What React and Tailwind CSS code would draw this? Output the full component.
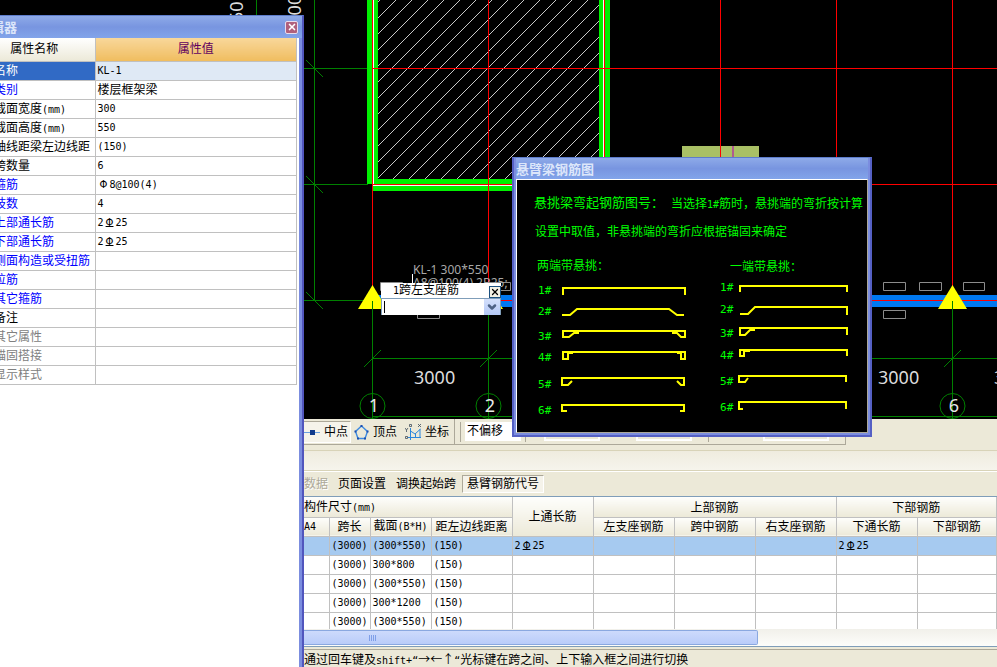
// App.jsx — beam reinforcement editor workspace
import { useState } from "react";
import { ChevronDown, X } from "lucide-react";

const RED = "#f00";
const GREEN = "#008000";
const WALL = "#00f000";

const PROPS = [
  { name: "名称", value: "KL-1", selected: true },
  { name: "类别", value: "楼层框架梁", tone: "text-[#0000ff]" },
  { name: "截面宽度(mm)", value: "300" },
  { name: "截面高度(mm)", value: "550" },
  { name: "轴线距梁左边线距", value: "(150)" },
  { name: "跨数量", value: "6" },
  { name: "箍筋", value: "Φ8@100(4)", tone: "text-[#0000ff]" },
  { name: "肢数", value: "4", tone: "text-[#0000ff]" },
  { name: "上部通长筋", value: "2Φ25", tone: "text-[#0000ff]" },
  { name: "下部通长筋", value: "2Φ25", tone: "text-[#0000ff]" },
  { name: "侧面构造或受扭筋", value: "", tone: "text-[#0000ff]" },
  { name: "拉筋", value: "", tone: "text-[#0000ff]" },
  { name: "其它箍筋", value: "", tone: "text-[#0000ff]" },
  { name: "备注", value: "" },
  { name: "其它属性", value: "", tone: "text-[#808080]" },
  { name: "锚固搭接", value: "", tone: "text-[#808080]" },
  { name: "显示样式", value: "", tone: "text-[#808080]" },
];

const SPANS = [
  ["(3000)", "(300*550)", "(150)", "2Φ25", "", "", "", "2Φ25", ""],
  ["(3000)", "300*800", "(150)", "", "", "", "", "", ""],
  ["(3000)", "(300*550)", "(150)", "", "", "", "", "", ""],
  ["(3000)", "300*1200", "(150)", "", "", "", "", "", ""],
  ["(3000)", "(300*550)", "(150)", "", "", "", "", "", ""],
];

// Both ends cantilevered
const BARS_BOTH = [
  { y: 294, d: "M563 295V288H685V295" },
  { y: 315, d: "M562 315H570L577 309H669L677 315H684" },
  { y: 340, d: "M579 333H574L569 337H563V331H685V337H681L677 333H672" },
  { y: 361, d: "M573 353H568V359H563V352H685V359H681V353H677" },
  { y: 388, d: "M572 381L568 385H562V378H684V385H681L677 381" },
  { y: 414, d: "M567 411H562V405H684V411H680" },
];

// One end cantilevered
const BARS_ONE = [
  { y: 291, d: "M740 292V286H847V292" },
  { y: 313, d: "M740 314H748L755 307H847V315" },
  { y: 337, d: "M755 330H750L745 335H740V328H847V335" },
  { y: 359, d: "M750 351H744V356H740V350H847V356" },
  { y: 385, d: "M748 378L745 382H739V376H846V382" },
  { y: 411, d: "M743 409H739V402H846V409" },
];

// Half-width characters are set narrower than the Chinese ones around them
function Mixed({ children }) {
  return String(children)
    .split(/([\x21-\x7e“]+|Φ)/)
    .map((part, i, all) => {
      if (part === "Φ") {
        const ribbed = all.join("").startsWith("2");
        return (
          <span key={i} className="inline-block w-3 text-center font-['DejaVu_Sans'] text-[10px]">
            <span className={ribbed ? "underline underline-offset-0" : ""}>Φ</span>
          </span>
        );
      }
      return i % 2 ? (
        <span key={i} className="font-['DejaVu_Sans_Mono'] text-[10px]">{part}</span>
      ) : (
        part
      );
    });
}

function GridMarker({ x, label }) {
  return (
    <g>
      <polygon points={`${x + 0.5},285 ${x - 14},309 ${x + 15},309`} fill="#ff0" />
      <path d={`M${x + 0.5} 301V419M${x - 8} 367L${x + 9} 350`} stroke={GREEN} fill="none" />
      <circle cx={x + 0.5} cy="406" r="12.5" stroke={GREEN} fill="none" />
      <text x={x + 2} y="412" textAnchor="middle" fontSize="18" fill="#e8e8e8">{label}</text>
    </g>
  );
}

function Drawing() {
  return (
    <svg className="block w-full bg-black" height="419" fontFamily="'Noto Sans', sans-serif">
      <defs>
        <pattern id="hatch" width="16" height="16" patternUnits="userSpaceOnUse">
          <path d="M12 0L-4 16M28 0L12 16" stroke="#c8c8c8" />
        </pattern>
      </defs>

      {/* Dimension lines */}
      <g stroke={GREEN} fill="none">
        <path d="M256.5 0V20M314.5 0V300M300 68.5H368M300 184.5H368M300 300.5H372" />
        <path d="M306 60L323 77M306 176L323 193M306 292L323 309" />
        <path d="M372 358.5H4000M372 416.5H4000" />
      </g>

      {/* Walls */}
      <rect x="378" y="0" width="221" height="179" fill="url(#hatch)" />
      <path d="M367 0H378V184H367zM599 0H610V184H599zM372 179H610V191H372z" fill={WALL} />
      <path d="M373.5 0V184M603.5 0V184M373 185.5H604" stroke="#fff" fill="none" />
      <rect x="682" y="146" width="77" height="14" fill="#a9c065" />
      <rect x="732" y="146" width="2" height="14" fill="#b05a90" />

      {/* Beam and axes */}
      <rect x="372" y="295" width="100%" height="12" fill="#0078f0" />
      <g stroke={RED} fill="none">
        <path d="M372.5 0V300M488.5 0V300M604.5 0V300M720.5 0V300M836.5 0V300M952.5 0V300" />
        <path d="M372 68.5H4000M372 184.5H4000M372 300.5H4000" />
      </g>
      <GridMarker x={372} label="1" />
      <GridMarker x={488} label="2" />
      <GridMarker x={952} label="6" />

      {/* Rebar note slots */}
      <g stroke="#8c8c8c" fill="none">
        <path d="M380.5 282.5h22v8h-22zM488.5 282.5h22v8h-22zM417.5 310.5h22v8h-22z" />
        <path d="M883.5 282.5h22v8h-22zM919.5 282.5h22v8h-22zM963.5 282.5h21v8h-21zM883.5 310.5h22v8h-22z" />
      </g>
      <path d="M412.5 274V284" stroke="#fff" />
      <g fill="#a8a8a8" fontSize="12">
        <text x="413" y="274">KL-1 300*550</text>
        <text x="413" y="287">A8@100(4) 2B25;</text>
      </g>
      <g fill="#dcdcdc" fontSize="18">
        <text x="414" y="384">3000</text>
        <text x="878" y="384">3000</text>
        <text x="994" y="384">3000</text>
        <text transform="translate(243 22) rotate(-90)">50</text>
        <text transform="translate(301 36) rotate(-90)">3000</text>
      </g>
    </svg>
  );
}

function PropertyWindow() {
  return (
    <section className="absolute top-[15px] bottom-0 -left-[60px] flex w-[364px] flex-col border-t border-r-2 border-t-[#5d7ccb] border-r-[#5156bd] bg-[#7b8ddf]">
      <header className="flex h-[22px] shrink-0 items-center justify-between bg-linear-to-b from-[#8eaae8] via-[#7895e0] to-[#82a4ea] pr-1 pl-3">
        <h2 className="pt-0.5 text-[13px] font-bold text-[#dce6fa]">属性编辑器</h2>
        <button
          type="button"
          aria-label="关闭"
          className="grid h-[13px] w-[13px] place-items-center rounded-xs border border-[#e8dcec] bg-[#b0607c] text-white"
        >
          <X size={10} strokeWidth={4} />
        </button>
      </header>
      <div className="mr-[3px] flex-1 bg-white">
        <table className="w-[357px] table-fixed border-collapse leading-[14px]">
          <colgroup>
            <col className="w-[155px]" />
            <col />
          </colgroup>
          <thead>
            <tr className="h-[23px]">
              <th className="border-r border-b border-[#c0c0c0] bg-linear-to-b from-white to-[#ece9d8] p-0 pl-[34px] font-normal">
                属性名称
              </th>
              <th className="border-r border-b border-[#c0c0c0] bg-linear-to-b from-[#f8d79a] to-[#f0bd5e] p-0 font-normal text-[#600060]">
                属性值
              </th>
            </tr>
          </thead>
          <tbody>
            {PROPS.map((row) => (
              <tr key={row.name} className="h-[19px]">
                <td
                  className={`border-r border-b border-[#c0c0c0] p-0 pt-px pl-[54px] whitespace-nowrap ${
                    row.selected ? "bg-[#316ac5] text-white" : row.tone || "text-black"
                  }`}
                >
                  <Mixed>{row.name}</Mixed>
                </td>
                <td
                  className={`border-r border-b border-[#c0c0c0] p-0 pl-0.5 ${
                    row.selected ? "bg-[#dfe9f5]" : ""
                  }`}
                >
                  <Mixed>{row.value}</Mixed>
                </td>
              </tr>
            ))}
          </tbody>
        </table>
      </div>
    </section>
  );
}

function SupportPopup() {
  const [value, setValue] = useState("");
  return (
    <div className="absolute top-[283px] left-[381px] w-[120px] bg-white">
      <div className="flex h-[15px] items-center justify-between pl-3 leading-[15px]">
        <label htmlFor="support">
          <Mixed>1跨左支座筋</Mixed>
        </label>
        <button
          type="button"
          aria-label="关闭"
          className="mt-0.5 grid h-3 w-3 place-items-center border border-[#1c5180] bg-[#f4f1e4] text-black"
        >
          <X size={10} strokeWidth={3} />
        </button>
      </div>
      <div className="flex h-[17px] border border-b-0 border-[#7f9db9]">
        <input
          id="support"
          value={value}
          onChange={(e) => setValue(e.target.value)}
          className="my-0.5 ml-0.5 min-w-0 flex-1 border-l border-black outline-none"
        />
        <button
          type="button"
          aria-label="展开"
          className="grid w-4 place-items-center bg-linear-to-b from-[#d4e0fc] to-[#b4c8f6] text-[#4d6185]"
        >
          <ChevronDown size={12} strokeWidth={5} />
        </button>
      </div>
    </div>
  );
}

function CantileverDialog() {
  return (
    <section className="absolute top-[157px] left-[512px] w-[360px] border-2 border-t border-[#5560c4] border-t-[#5d7ccb] bg-[#7b8ddf] px-0.5 pb-0.5">
      <header className="flex h-[21px] items-center bg-linear-to-b from-[#8eaae8] via-[#7895e0] to-[#82a4ea]">
        <h2 className="pt-0.5 text-[13px] font-bold text-[#dce6fa]">悬臂梁钢筋图</h2>
      </header>
      <div className="border border-white border-r-[#aca899] border-b-[#aca899] bg-black">
        <svg viewBox="517 180 350 252" className="block w-full" fill="#00ff00" fontSize="12">
          <text x="534" y="207" fontSize="13">悬挑梁弯起钢筋图号：</text>
          <text x="671" y="208">
            当选择<tspan fontSize="10" fontFamily="DejaVu Sans Mono">1#</tspan>筋时，悬挑端的弯折按计算
          </text>
          <text x="535" y="236">设置中取值，非悬挑端的弯折应根据锚固来确定</text>
          <text x="537" y="270">两端带悬挑：</text>
          <text x="730" y="271">一端带悬挑：</text>
          <g fontFamily="DejaVu Sans Mono" fontSize="11">
            {BARS_BOTH.map((bar, i) => (
              <text key={i} x="538" y={bar.y}>{i + 1}#</text>
            ))}
            {BARS_ONE.map((bar, i) => (
              <text key={i} x="720" y={bar.y}>{i + 1}#</text>
            ))}
          </g>
          <g stroke="#ff0" strokeWidth="2" fill="none">
            {[...BARS_BOTH, ...BARS_ONE].map((bar) => (
              <path key={bar.d} d={bar.d} />
            ))}
          </g>
        </svg>
      </div>
    </section>
  );
}

function SnapToolbar() {
  return (
    <div className="flex h-[26px] w-[542px] items-center border-r border-b border-[#aca899]">
      <button
        type="button"
        className="flex h-[22px] w-[47px] items-center gap-1 border-t border-r border-b border-t-[#aca899] border-r-white border-b-white bg-[#f5f3ea]"
      >
        <svg width="16" height="16">
          <path d="M0 8.500H16" stroke="#6aa0e0" strokeWidth="1" />
          <rect x="6" y="6" width="5" height="5" fill="#103a8c" />
        </svg>
        中点
      </button>
      <button type="button" className="flex items-center gap-1 pl-[3px]">
        <svg width="15" height="16" fill="none">
          <path d="M7.500 2L13.500 7.500L11 14.500H4L1.500 7.500Z" stroke="#3d8ae0" strokeWidth="1.400" />
          <path d="M6.500 1h2v2h-2zM12.500 6.500h2v2h-2zM10 13.500h2v2h-2zM3 13.500h2v2h-2zM.5 6.500h2v2h-2z" fill="#1c4fae" />
        </svg>
        顶点
      </button>
      <button type="button" className="flex items-center gap-1 pl-2">
        <svg width="16" height="16" fill="none">
          <path d="M5.500 4V16M3 13.500H16M5.500 7L10 10L15.500 5M10.500 10V14M15 5V13" stroke="#2a86dc" />
          <path d="M4.500 .5h2v2h-2zM13 0l3 3M16 0l-3 3M0 4l1.500 2l1.500-2M1.500 6v2M.5 12.500h2v2h-2z" stroke="#3f4c5c" strokeWidth=".8" />
        </svg>
        坐标
      </button>
      <span className="ml-[5px] h-full w-px bg-[#aca899]" />
      <span className="ml-[5px] h-5 w-px bg-[#aca899]" />
      <select
        aria-label="偏移"
        className="ml-1 h-[19px] w-14 appearance-none border-r-2 border-white bg-white pl-0.5 leading-[17px]"
      >
        <option>不偏移</option>
      </select>
      <span className="ml-1 h-5 w-px bg-[#aca899]" />
      <input aria-label="X" readOnly className="ml-[18px] h-[19px] w-14 border-2 border-white" />
      <input aria-label="Y" readOnly className="ml-9 h-[19px] w-14 border-2 border-white" />
      <span className="ml-4 h-5 w-px bg-[#aca899]" />
      <input aria-label="角度" readOnly className="ml-[54px] h-[19px] w-[66px] border-2 border-white" />
    </div>
  );
}

function SpanTable() {
  const head =
    "border-r border-b border-[#c0c0c0] bg-linear-to-b from-[#fefefc] to-[#ece9d8] p-0 font-normal whitespace-nowrap";
  return (
    <div className="h-[132px] overflow-hidden bg-white">
      <table className="w-full table-fixed border-collapse leading-[14px]">
        <colgroup>
          <col className="w-[25px]" />
          <col className="w-[41px]" />
          <col className="w-[61px]" />
          <col className="w-[81px]" />
          <col className="w-[81px]" />
          <col className="w-[81px]" />
          <col className="w-[81px]" />
          <col className="w-[81px]" />
          <col className="w-[81px]" />
          <col />
        </colgroup>
        <thead>
          <tr className="h-5">
            <th colSpan={4} className={`${head} pt-0.5 text-left`}><Mixed>构件尺寸(mm)</Mixed></th>
            <th rowSpan={2} className={`${head} pt-0.5`}>上通长筋</th>
            <th colSpan={3} className={`${head} pt-0.5`}>上部钢筋</th>
            <th colSpan={2} className={`${head} pt-0.5`}>下部钢筋</th>
          </tr>
          <tr className="h-[19px]">
            <th className={`${head} text-left`}><Mixed>A4</Mixed></th>
            <th className={head}>跨长</th>
            <th className={head}><Mixed>截面(B*H)</Mixed></th>
            <th className={head}>距左边线距离</th>
            <th className={head}>左支座钢筋</th>
            <th className={head}>跨中钢筋</th>
            <th className={head}>右支座钢筋</th>
            <th className={head}>下通长筋</th>
            <th className={head}>下部钢筋</th>
          </tr>
        </thead>
        <tbody>
          {SPANS.map((cells, r) => (
            <tr key={r} className={`h-[19px] ${r === 0 ? "bg-[#a6caf0]" : ""}`}>
              <td className="border-r border-b border-[#c0c0c0]" />
              {cells.map((cell, c) => (
                <td
                  key={c}
                  className={`border-r border-b border-[#c0c0c0] p-0 whitespace-nowrap ${
                    c === 0 ? "pr-0.5 text-right" : "pl-0.5"
                  }`}
                >
                  <Mixed>{cell}</Mixed>
                </td>
              ))}
            </tr>
          ))}
        </tbody>
      </table>
    </div>
  );
}

export default function App() {
  return (
    <div className="relative min-h-screen overflow-hidden bg-[#ece9d8] font-['Liberation_Sans','Noto_Sans_CJK_SC',sans-serif] text-[12px] text-black">
      <Drawing />

      <main className="pl-[304px]">
        <SnapToolbar />

        <div className="mt-[5px] h-[21px] border-t border-b border-t-[#d8d3b8] border-b-[#d8d3b8] bg-linear-to-b from-[#efecdf] to-[#f6f4ec]" />

        {/* Span table commands */}
        <nav className="flex h-[26px] items-center border-t border-b border-t-white border-b-[#7f9db9]">
          <button type="button" disabled className="text-[#aca899] text-shadow-[1px_1px_0_#fff]">数据</button>
          <button type="button" className="ml-[10px]">页面设置</button>
          <button type="button" className="ml-[10px]">调换起始跨</button>
          <button
            type="button"
            className="ml-[6px] h-[18px] w-[82px] border border-t-[#aca899] border-r-white border-b-white border-l-[#aca899] bg-[#f5f3ea] leading-4"
          >
            悬臂钢筋代号
          </button>
        </nav>

        <SpanTable />

        {/* Horizontal scroll bar */}
        <div className="flex h-[18px] border-b border-[#7f9db9] bg-linear-to-b from-[#f1f0ea] to-[#fdfdfa] py-px">
          <div className="flex w-[454px] items-center rounded-r-xs border border-l-0 border-[#8aa8e0] bg-linear-to-b from-[#cddafc] to-[#b9ccf9] pl-[65px]">
            <span className="flex gap-px">
              <i className="h-1.5 w-px bg-[#7f9fe8]" />
              <i className="h-1.5 w-px bg-[#7f9fe8]" />
              <i className="h-1.5 w-px bg-[#7f9fe8]" />
              <i className="h-1.5 w-px bg-[#7f9fe8]" />
            </span>
          </div>
        </div>

        <footer className="mt-0.5 border-t border-[#aca899] pt-px font-['Noto_Sans_CJK_SC',sans-serif] leading-4">
          <Mixed>通过回车键及shift+“→←↑“光标键在跨之间、上下输入框之间进行切换</Mixed>
        </footer>
      </main>

      <PropertyWindow />
      <SupportPopup />
      <CantileverDialog />
    </div>
  );
}
